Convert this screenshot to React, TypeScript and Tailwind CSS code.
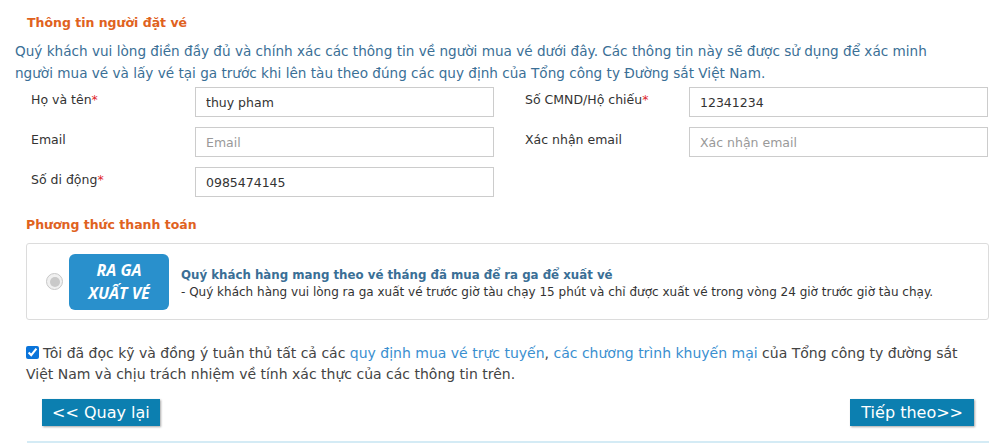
import React, { useState } from "react";

const font = { fontFamily: '"DejaVu Sans", Verdana, sans-serif' };

const Field: React.FC<{
  label: string;
  required?: boolean;
  value?: string;
  placeholder?: string;
}> = ({ label, required, value, placeholder }) => {
  const [v, setV] = useState(value ?? "");
  return (
    <div className="flex items-center w-[463px]">
      <label className="w-[164px] text-[12.5px] text-[#333] pb-[3px]">
        {label}
        {required && <span className="text-[#e0262b]">*</span>}
      </label>
      <input
        value={v}
        onChange={(e) => setV(e.target.value)}
        placeholder={placeholder}
        className="w-[299px] h-[30px] border border-[#ccc] px-[10px] text-[12.5px] text-[#333] placeholder:text-[#999] outline-none"
      />
    </div>
  );
};

export default function App() {
  const [agree, setAgree] = useState(true);

  return (
    <div className="w-[1003px] h-[443px] overflow-hidden bg-white" style={font}>
      {/* Thông tin người đặt vé */}
      <h3 className="pl-[27px] pt-[14px] text-[12.5px] font-bold text-[#e0621e] leading-[18px]">
        Thông tin người đặt vé
      </h3>
      <p className="pl-[15px] pr-[45px] mt-[8px] text-[13.6px] leading-[22px] text-[#3a6f96]">
        Quý khách vui lòng điền đầy đủ và chính xác các thông tin về người mua vé dưới đây. Các thông tin này sẽ được sử dụng để xác minh người mua vé và lấy vé tại ga trước khi lên tàu theo đúng các quy định của Tổng công ty Đường sắt Việt Nam.
      </p>

      <div className="pl-[31px] mt-[3px] flex flex-col gap-[10px]">
        <div className="flex gap-[31px]">
          <Field label="Họ và tên" required value="thuy pham" />
          <Field label="Số CMND/Hộ chiếu" required value="12341234" />
        </div>
        <div className="flex gap-[31px]">
          <Field label="Email" placeholder="Email" />
          <Field label="Xác nhận email" placeholder="Xác nhận email" />
        </div>
        <div className="flex gap-[31px]">
          <Field label="Số di động" required value="0985474145" />
        </div>
      </div>

      {/* Phương thức thanh toán */}
      <h3 className="pl-[26px] mt-[19px] text-[12.5px] font-bold text-[#e0621e] leading-[18px]">
        Phương thức thanh toán
      </h3>
      <div className="ml-[26px] mt-[9px] w-[963px] h-[77px] border border-[#dcdcdc] rounded-[3px] flex items-center">
        <span className="ml-[19px] w-[17px] h-[17px] rounded-full border border-[#c8c8c8] bg-[#f0f0f0] flex items-center justify-center">
          <span className="w-[10px] h-[10px] rounded-full bg-[#c9c9c9]" />
        </span>
        <div
          className="ml-[6px] w-[100px] h-[56px] rounded-[6px] bg-[#2990cc] flex flex-col items-center justify-center text-white font-bold italic text-[16px] leading-[23px]"
          style={{ fontFamily: '"Open Sans", "DejaVu Sans", sans-serif' }}
        >
          <span>RA GA</span>
          <span>XUẤT VÉ</span>
        </div>
        <div className="ml-[12px] mt-[5px] flex flex-col">
          <span className="text-[11.8px] font-bold text-[#3a6f96] leading-[17px]">
            Quý khách hàng mang theo vé tháng đã mua để ra ga để xuất vé
          </span>
          <span className="text-[12px] text-[#333] leading-[17px]">
            - Quý khách hàng vui lòng ra ga xuất vé trước giờ tàu chạy 15 phút và chỉ được xuất vé trong vòng 24 giờ trước giờ tàu chạy.
          </span>
        </div>
      </div>

      {/* Điều khoản */}
      <div className="pl-[26px] pr-[20px] mt-[23px] text-[14px] leading-[21px] text-[#444]">
        <input
          type="checkbox"
          checked={agree}
          onChange={() => setAgree(!agree)}
          className="w-[13px] h-[13px] mr-[4px] align-[-1px] accent-[#0a74da]"
        />
        Tôi đã đọc kỹ và đồng ý tuân thủ tất cả các{" "}
        <a className="text-[#3a8fd0]">quy định mua vé trực tuyến</a>,{" "}
        <a className="text-[#3a8fd0]">các chương trình khuyến mại</a> của Tổng công ty đường sắt Việt Nam và chịu trách nhiệm về tính xác thực của các thông tin trên.
      </div>

      <div className="flex justify-between pl-[42px] pr-[29px] mt-[14px]">
        <button className="h-[27px] px-[10px] bg-[#0c7fb0] text-white text-[16px] leading-[27px] shadow-[1px_1px_2px_rgba(0,0,0,0.35)]">
          &lt;&lt; Quay lại
        </button>
        <button className="h-[27px] px-[11px] bg-[#0c7fb0] text-white text-[16px] leading-[27px] shadow-[1px_1px_2px_rgba(0,0,0,0.35)]">
          Tiếp theo&gt;&gt;
        </button>
      </div>

      <div className="ml-[27px] mt-[15px] w-[962px] h-[3px] bg-[#d4ebf5]" />
    </div>
  );
}
